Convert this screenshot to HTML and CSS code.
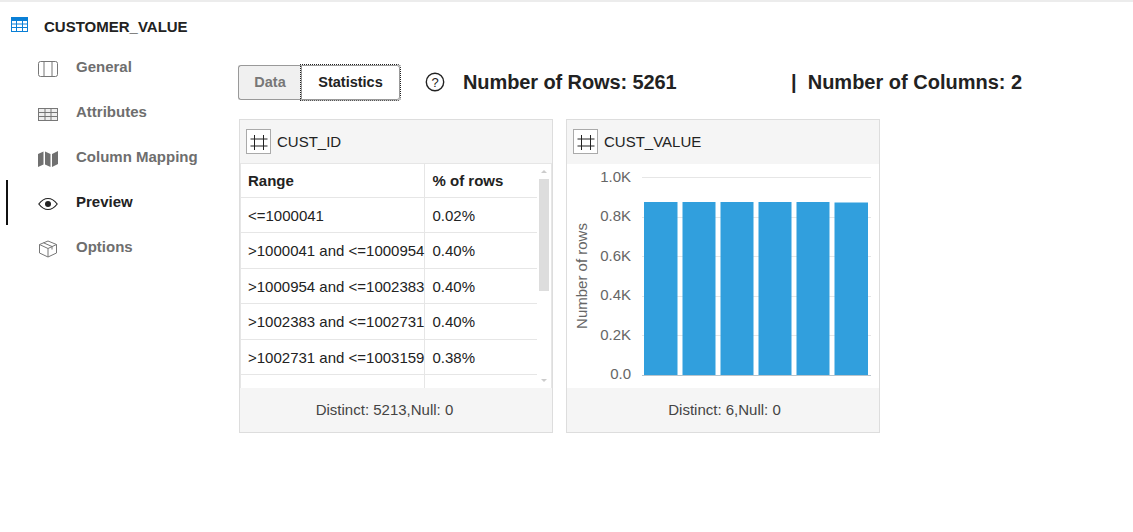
FILE: index.html
```html
<!DOCTYPE html>
<html lang="en">

<head>
    <meta charset="UTF-8">
    <meta name="viewport" content="width=device-width, initial-scale=1.0">
    <title>CUSTOMER_VALUE</title>
    <link rel="stylesheet" href="styles.css">
</head>

<body>
    <div class="top-strip"></div>

    <header class="page-title">
        <svg class="title-icon" width="17" height="15" viewBox="0 0 17 15">
            <rect x="0" y="0" width="17" height="15" fill="#0a7fd6"/>
            <path d="M1 4h4v2.5H1zM6 4h5v2.5H6zM12 4h4v2.5h-4zM1 7.5h4V10H1zM6 7.5h5V10H6zM12 7.5h4V10h-4zM1 11h4v3H1zM6 11h5v3H6zM12 11h4v3h-4z" fill="#fff"/>
        </svg>
        <span>CUSTOMER_VALUE</span>
    </header>

    <div class="layout">
        <nav class="side-nav">
            <div class="nav-item">
                <svg width="20" height="16" viewBox="0 0 20 16" fill="none" stroke="#777" stroke-width="1">
                    <rect x="0.5" y="0.5" width="19" height="15" rx="2"/>
                    <path d="M6 0.5v15M14 0.5v15"/>
                </svg>
                <span>General</span>
            </div>
            <div class="nav-item">
                <svg width="20" height="14" viewBox="0 0 20 14" fill="none" stroke="#777" stroke-width="1">
                    <rect x="0.5" y="1.5" width="19" height="12" fill="#eee"/>
                    <path d="M0.5 5.5h19M0.5 9.5h19M7 1.5v12M13 1.5v12"/>
                </svg>
                <span>Attributes</span>
            </div>
            <div class="nav-item">
                <svg width="20" height="16" viewBox="0 0 20 16" fill="#707070">
                    <path d="M0 3l5.5-2.5v13L0 16zM7 0.5l5.5 2.5v13L7 13.500zM14 3l6-3v13l-6 3z"/>
                </svg>
                <span>Column Mapping</span>
            </div>
            <div class="nav-item active">
                <svg width="20" height="14" viewBox="0 0 20 14" fill="none" stroke="#222" stroke-width="1.200">
                    <path d="M0.800 7C4 2.800 7 1.500 10 1.500S16 2.800 19.200 7C16 11.200 13 12.500 10 12.500S4 11.200 0.800 7z"/>
                    <circle cx="10" cy="7" r="3" fill="#222" stroke="none"/>
                </svg>
                <span>Preview</span>
            </div>
            <div class="nav-item">
                <svg width="20" height="18" viewBox="0 0 20 18" fill="none" stroke="#777" stroke-width="1">
                    <path d="M10 1L18.500 4.500V13L10 17L1.500 13V4.500zM1.500 4.500L10 8.500L18.500 4.500M10 8.500V17M5.500 2.800L14 6.500V9.500"/>
                </svg>
                <span>Options</span>
            </div>
        </nav>

        <main class="content">
            <div class="toolbar">
                <div class="tabs">
                    <button class="tab">Data</button>
                    <button class="tab tab-selected">Statistics</button>
                </div>
                <svg class="help-icon" width="20" height="20" viewBox="0 0 20 20">
                    <circle cx="10" cy="10" r="8.700" fill="none" stroke="#222" stroke-width="1.400"/>
                    <text x="10" y="14.500" text-anchor="middle" class="help-mark">?</text>
                </svg>
                <div class="count count-rows">Number of Rows: 5261</div>
                <div class="count">|&nbsp; Number of Columns: 2</div>
            </div>

            <div class="cards">
                <section class="card">
                    <div class="card-head">
                        <span class="hash-box">
                            <svg width="18" height="18" viewBox="0 0 18 18" stroke="#222" stroke-width="1" fill="none">
                                <path d="M4.500 2v15M13.500 2v15M0.500 6h17M0.500 13h17"/>
                            </svg>
                        </span>
                        <span>CUST_ID</span>
                    </div>
                    <div class="card-body table-wrap">
                        <table class="stats">
                            <thead>
                                <tr><th>Range</th><th>% of rows</th></tr>
                            </thead>
                            <tbody>
                                <tr><td>&lt;=1000041</td><td>0.02%</td></tr>
                                <tr><td>&gt;1000041 and &lt;=1000954</td><td>0.40%</td></tr>
                                <tr><td>&gt;1000954 and &lt;=1002383</td><td>0.40%</td></tr>
                                <tr><td>&gt;1002383 and &lt;=1002731</td><td>0.40%</td></tr>
                                <tr><td>&gt;1002731 and &lt;=1003159</td><td>0.38%</td></tr>
                                <tr><td>&nbsp;</td><td>&nbsp;</td></tr>
                            </tbody>
                        </table>
                        <div class="scrollbar">
                            <span class="arrow-up"></span>
                            <span class="thumb"></span>
                            <span class="arrow-down"></span>
                        </div>
                    </div>
                    <div class="card-foot foot-table">Distinct: 5213,Null: 0</div>
                </section>

                <section class="card">
                    <div class="card-head head-flush">
                        <span class="hash-box">
                            <svg width="18" height="18" viewBox="0 0 18 18" stroke="#222" stroke-width="1" fill="none">
                                <path d="M4.500 2v15M13.500 2v15M0.500 6h17M0.500 13h17"/>
                            </svg>
                        </span>
                        <span>CUST_VALUE</span>
                    </div>
                    <div class="card-body">
                        <svg class="chart" width="312" height="224" viewBox="567 164 312 224">
                            <g stroke="#e6e6e6" stroke-width="1">
                                <path d="M642 177.500h229M642 217.500h229M642 256.500h229M642 296.500h229M642 335.500h229"/>
                            </g>
                            <g fill="#319fdd">
                                <rect x="644" y="202" width="33.500" height="173"/>
                                <rect x="682.500" y="202" width="33" height="173"/>
                                <rect x="720.500" y="202" width="33" height="173"/>
                                <rect x="758.500" y="202" width="33" height="173"/>
                                <rect x="796.500" y="202" width="33" height="173"/>
                                <rect x="834.500" y="202.500" width="33.500" height="172.500"/>
                            </g>
                            <path d="M642 375.500h229" stroke="#b8c4cc" stroke-width="1"/>
                            <g class="axis-label" text-anchor="end">
                                <text x="631" y="182">1.0K</text>
                                <text x="631" y="221">0.8K</text>
                                <text x="631" y="261">0.6K</text>
                                <text x="631" y="300">0.4K</text>
                                <text x="631" y="340">0.2K</text>
                                <text x="631" y="379">0.0</text>
                            </g>
                            <text class="axis-title" text-anchor="middle" transform="translate(587 276) rotate(-90)">Number of rows</text>
                        </svg>
                    </div>
                    <div class="card-foot foot-chart">Distinct: 6,Null: 0</div>
                </section>
            </div>
        </main>
    </div>
</body>

</html>
```

FILE: styles.css
```css
body {
    margin: 0;
    height: 532px;
    overflow: hidden;
    background-color: #fff;
    font-family: "Liberation Sans", Arial, sans-serif;
    color: #222;
}

.top-strip {
    height: 2px;
    background-color: #ececec;
}

.page-title {
    display: flex;
    align-items: center;
    height: 48px;
    padding-left: 11px;
    font-size: 15px;
    font-weight: bold;
    color: #222;
}

.title-icon {
    margin-right: 16px;
    margin-top: -3px;
}

.layout {
    display: flex;
}

/* left menu */
.side-nav {
    width: 238px;
    padding-left: 6px;
    box-sizing: border-box;
    flex-shrink: 0;
    margin-top: -5px;
}

.nav-item {
    display: flex;
    align-items: center;
    height: 45px;
    box-sizing: border-box;
    padding-left: 30px;
    padding-bottom: 2px;
    border-left: 2px solid transparent;
    font-size: 15px;
    font-weight: bold;
    color: #6e6e6e;
}

.nav-item svg {
    width: 20px;
    margin-right: 18px;
    margin-top: 4px;
    flex-shrink: 0;
}

.nav-item.active {
    border-left-color: #111;
    color: #222;
}

/* tabs and counts */
.toolbar {
    display: flex;
    align-items: center;
    height: 38px;
    margin-top: 13px;
}

.tabs {
    display: flex;
    height: 35px;
}

.tab {
    font-family: inherit;
    font-size: 14.500px;
    font-weight: bold;
    padding: 0;
    background-color: #f0f0f0;
    color: #777;
    border: 1px solid #999;
    border-right: none;
    border-radius: 3px 0 0 3px;
    width: 63px;
}

.tab-selected {
    width: 99px;
    background-color: #fff;
    color: #222;
    border: 1px solid #999;
    border-radius: 0 3px 3px 0;
    outline: 1px dotted #222;
    outline-offset: 0;
}

.help-icon {
    margin-left: 25px;
    margin-right: 18px;
}

.help-mark {
    font-size: 13px;
    fill: #222;
}

.count {
    font-size: 20px;
    font-weight: bold;
    color: #222;
}

.count-rows {
    width: 328px;
    letter-spacing: -0.100px;
}

/* stat cards */
.cards {
    display: flex;
    gap: 13px;
    margin-top: 18px;
    margin-left: 1px;
}

.card {
    width: 314px;
    height: 314px;
    box-sizing: border-box;
    border: 1px solid #ddd;
    display: flex;
    flex-direction: column;
}

.card-head {
    display: flex;
    align-items: center;
    height: 44px;
    flex-shrink: 0;
    padding-left: 6px;
    background-color: #f5f5f5;
    border-bottom: 1px solid #e6e6e6;
    font-size: 15px;
    color: #222;
    box-sizing: border-box;
}

.head-flush {
    border-bottom: none;
    padding-bottom: 1px;
}

.hash-box {
    display: flex;
    align-items: center;
    justify-content: center;
    width: 25px;
    height: 25px;
    box-sizing: border-box;
    border: 1px solid #aaa;
    background-color: #fff;
    margin-right: 6px;
}

.card-body {
    height: 224px;
    flex-shrink: 0;
    overflow: hidden;
    background-color: #fff;
}

.table-wrap {
    position: relative;
    box-sizing: border-box;
    border-left: 1px solid #e6e6e6;
    border-right: 1px solid #e6e6e6;
}

.stats {
    width: 296px;
    table-layout: fixed;
    border-collapse: collapse;
    font-size: 15px;
}

.stats th,
.stats td {
    height: 35.500px;
    padding: 1px 0 0 8px;
    box-sizing: border-box;
    text-align: left;
    white-space: nowrap;
    border-bottom: 1px solid #e6e6e6;
}

.stats th {
    height: 33px;
}

.stats th:first-child,
.stats td:first-child {
    width: 183px;
    padding-left: 7px;
    border-right: 1px solid #e6e6e6;
}

.scrollbar {
    position: absolute;
    top: 0;
    right: 0;
    bottom: 0;
    width: 14px;
    display: flex;
    flex-direction: column;
    align-items: center;
}

.arrow-up,
.arrow-down {
    width: 0;
    height: 0;
    border-left: 3px solid transparent;
    border-right: 3px solid transparent;
}

.arrow-up {
    margin-top: 6px;
    border-bottom: 3px solid #ccc;
}

.arrow-down {
    margin-top: auto;
    margin-bottom: 6px;
    border-top: 3px solid #ccc;
}

.thumb {
    width: 10px;
    height: 112px;
    margin-top: 6px;
    background-color: #ddd;
}

.card-foot {
    flex: 1;
    display: flex;
    align-items: center;
    justify-content: center;
    padding-bottom: 2px;
    background-color: #f5f5f5;
    font-size: 15px;
    color: #444;
}

.foot-table {
    padding-right: 23px;
}

.foot-chart {
    padding-left: 3px;
}

/* chart */
.chart {
    display: block;
}

.axis-label {
    font-size: 15px;
    fill: #666;
}

.axis-title {
    font-size: 15px;
    fill: #666;
}
```
